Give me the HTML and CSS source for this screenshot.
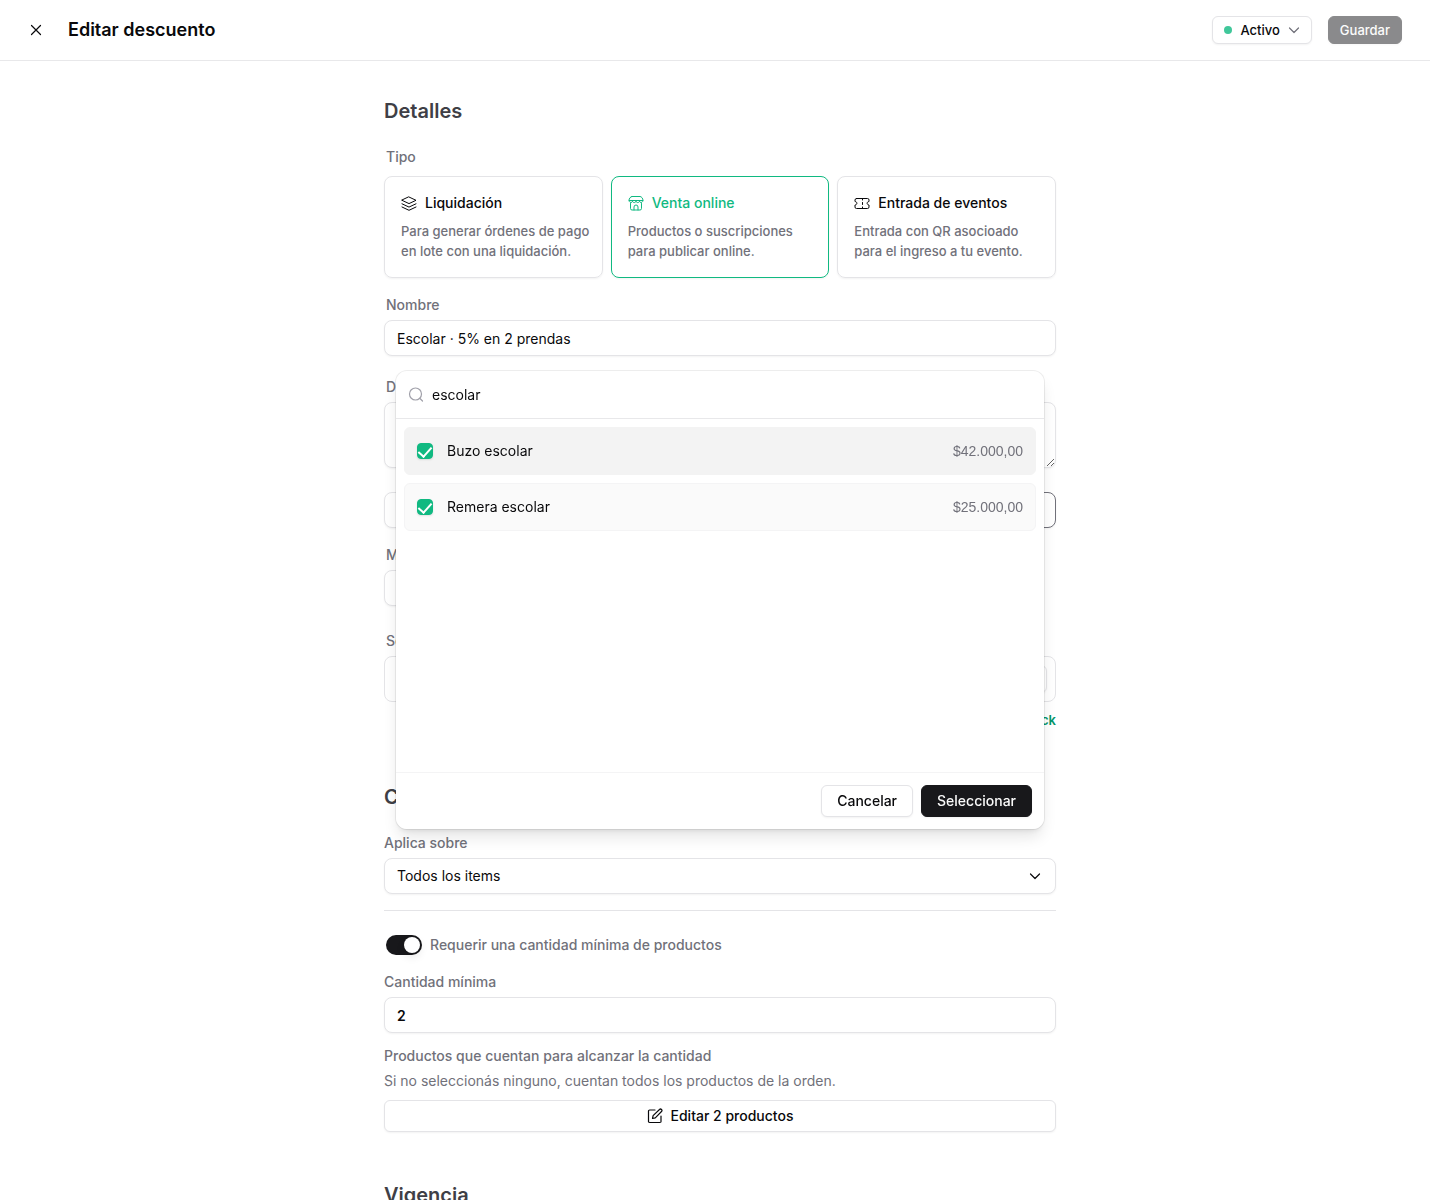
FILE: index.html
```html
<!DOCTYPE html>
<html lang="es">
<head>
    <meta charset="UTF-8">
    <meta name="viewport" content="width=device-width, initial-scale=1.0">
    <title>Editar descuento</title>
    <link rel="stylesheet" href="styles.css">
</head>
<body>
    <header class="topbar">
        <button type="button" class="close" aria-label="Cerrar">
            <svg width="16" height="16" viewBox="0 0 16 16"><path d="M3.5 3.5l9 9M12.5 3.5l-9 9"/></svg>
        </button>
        <h1>Editar descuento</h1>
        <button type="button" class="btn btn-small status">
            <span class="dot"></span>
            Activo
            <svg width="12" height="12" viewBox="0 0 12 12"><path d="M1.500 4L6 8.500 10.500 4"/></svg>
        </button>
        <button type="button" class="btn btn-small btn-dark" disabled>Guardar</button>
    </header>

    <main>
        <form class="form">
            <section class="details">
                <h2>Detalles</h2>
                <fieldset class="types">
                    <legend class="label">Tipo</legend>
                    <div class="cards">
                        <label class="card">
                            <input type="radio" name="tipo" value="liquidacion">
                            <span class="card-title">
                                <svg width="16" height="16" viewBox="0 0 16 16"><path d="M8 2L15 5.300 8 8.600 1 5.300z"/><path d="M1 8.800l7 3.300 7-3.300"/><path d="M1 12l7 3.300L15 12"/></svg>
                                Liquidación
                            </span>
                            <span class="card-text">Para generar órdenes de pago en lote con una liquidación.</span>
                        </label>
                        <label class="card">
                            <input type="radio" name="tipo" value="online" checked>
                            <span class="card-title">
                                <svg width="16" height="16" viewBox="0 0 16 16"><path d="M4 1.500h8c1.500 0 3 2 3 4H1c0-2 1.500-4 3-4z"/><path d="M1 5.500c0 2.600 3.500 2.600 3.500.500 0 2.100 3.500 2.100 3.500 0 0 2.100 3.500 2.100 3.500 0 0 2.100 3.500 2.100 3.500-.500M2.500 8.500v5a1.500 1.500 0 0 0 1.500 1.500h8a1.500 1.500 0 0 0 1.500-1.500v-5M6 15v-3a2 2 0 0 1 4 0v3"/></svg>
                                Venta online
                            </span>
                            <span class="card-text">Productos o suscripciones para publicar online.</span>
                        </label>
                        <label class="card">
                            <input type="radio" name="tipo" value="eventos">
                            <span class="card-title">
                                <svg width="16" height="16" viewBox="0 0 16 16"><path d="M2.500 3.500h11A1.500 1.500 0 0 1 15 5v1.500c-2.500.300-2.500 3.200 0 3.500v2a1.500 1.500 0 0 1-1.500 1.500h-11A1.500 1.500 0 0 1 1 12v-2c2.500-.300 2.500-3.200 0-3.500V5a1.500 1.500 0 0 1 1.500-1.500z"/><path d="M8.500 3.500V5M8.500 7.500v2M8.500 12v1.500"/></svg>
                                Entrada de eventos
                            </span>
                            <span class="card-text">Entrada con QR asocioado para el ingreso a tu evento.</span>
                        </label>
                    </div>
                </fieldset>

                <div class="field">
                    <label class="label" for="nombre">Nombre</label>
                    <input class="control" type="text" id="nombre" value="Escolar · 5% en 2 prendas">
                </div>
                <div class="field spaced">
                    <label class="label" for="descripcion">Descripción</label>
                    <textarea class="control" id="descripcion"></textarea>
                </div>
                <div class="options">
                    <button type="button" class="control" aria-label="Porcentaje"></button>
                    <button type="button" class="control selected" aria-label="Cantidad fija"></button>
                </div>
                <div class="field">
                    <label class="label" for="monto">Monto</label>
                    <input class="control short" type="text" id="monto">
                </div>
                <div class="field wide-gap">
                    <label class="label" for="stock">Selección</label>
                    <div class="stock">
                        <input class="control short" type="text" id="stock">
                    </div>
                </div>
                <a href="#" class="link">Agregar stock</a>
            </section>

            <section class="conditions">
                <h2>Condiciones</h2>
                <div class="field">
                    <label class="label" for="aplica">Aplica sobre</label>
                    <div class="select">
                        <select class="control" id="aplica">
                            <option>Todos los items</option>
                        </select>
                        <svg width="12" height="12" viewBox="0 0 12 12"><path d="M1.500 4L6 8.500 10.500 4"/></svg>
                    </div>
                </div>
                <hr>
                <label class="switch">
                    <input type="checkbox" role="switch" checked>
                    Requerir una cantidad mínima de productos
                </label>
                <div class="field">
                    <label class="label" for="cantidad">Cantidad mínima</label>
                    <input class="control strong" type="text" inputmode="numeric" id="cantidad" value="2">
                </div>
                <div class="products">
                    <h3 class="label">Productos que cuentan para alcanzar la cantidad</h3>
                    <p>Si no seleccionás ninguno, cuentan todos los productos de la orden.</p>
                    <button type="button" class="btn">
                        <svg width="16" height="16" viewBox="0 0 16 16"><path d="M8 2H2.600A1.100 1.100 0 0 0 1.500 3.100v10.300a1.100 1.100 0 0 0 1.100 1.100h10.300a1.100 1.100 0 0 0 1.100-1.100V8"/><path d="M5.500 10.500l.6-2.900 6.400-6.100a1.400 1.400 0 0 1 2 2L8.300 9.800z"/></svg>
                        Editar 2 productos
                    </button>
                </div>
            </section>

            <section>
                <h2>Vigencia</h2>
            </section>
        </form>
    </main>

    <div class="dialog" role="dialog" aria-label="Seleccionar productos">
        <div class="search">
            <svg width="16" height="16" viewBox="0 0 16 16"><circle cx="7.500" cy="7" r="6"/><path d="M12 11.500l2.500 2.500"/></svg>
            <input type="text" aria-label="Buscar productos" value="escolar">
        </div>
        <div class="items">
            <label class="item active">
                <input type="checkbox" checked>
                <span>Buzo escolar</span>
                <span class="price">$42.000,00</span>
            </label>
            <label class="item">
                <input type="checkbox" checked>
                <span>Remera escolar</span>
                <span class="price">$25.000,00</span>
            </label>
        </div>
        <div class="actions">
            <button type="button" class="btn">Cancelar</button>
            <button type="button" class="btn btn-dark">Seleccionar</button>
        </div>
    </div>
</body>
</html>
```
FILE: styles.css
```css
* {
    box-sizing: border-box;
}
body {
    margin: 0;
    height: 100vh;
    display: flex;
    flex-direction: column;
    font-family: Inter, "Liberation Sans", sans-serif;
    font-size: 14px;
    line-height: 20px;
    color: #09090b;
    background-color: #fff;
}
button, input, textarea, select {
    font: inherit;
    color: inherit;
    margin: 0;
}
h1, h2, h3, p {
    margin: 0;
}
svg {
    fill: none;
    stroke: currentColor;
    stroke-width: 1.2;
    stroke-linecap: round;
    stroke-linejoin: round;
    flex-shrink: 0;
}

/* Top bar */
.topbar {
    display: flex;
    align-items: center;
    flex-shrink: 0;
    height: 61px;
    margin-right: 10px;
    padding: 0 28px;
    border-bottom: 1px solid #e8e8ea;
}
.topbar h1 {
    flex: 1;
    margin-left: 24px;
    font-size: 18px;
    line-height: 28px;
    font-weight: 600;
}
.close {
    display: flex;
    padding: 0;
    border: none;
    background: none;
}

/* Buttons */
.btn {
    display: flex;
    align-items: center;
    justify-content: center;
    gap: 8px;
    height: 32px;
    padding: 0 15px;
    border: 1px solid #e4e4e7;
    border-radius: 6px;
    background-color: #fff;
    font-weight: 500;
    box-shadow: 0 1px 2px rgba(0, 0, 0, 0.05);
}
.btn-small {
    height: 28px;
    padding: 0 11px;
    font-size: 13px;
}
.btn-dark {
    background-color: #18181b;
    border-color: #18181b;
    color: #fafafa;
}
.btn-dark:disabled {
    opacity: 0.5;
}
.status {
    margin-right: 16px;
}
.status svg {
    color: #71717a;
}
.dot {
    width: 8px;
    height: 8px;
    border-radius: 50%;
    background-color: #40c79a;
}

/* Form */
main {
    flex: 1;
    overflow-y: auto;
    scrollbar-width: none;
}
.form {
    max-width: 704px;
    margin: 0 auto;
    padding: 36px 16px;
}
h2 {
    margin-bottom: 22px;
    font-size: 20px;
    line-height: 28px;
    font-weight: 600;
    color: #3f3f46;
}
.label {
    display: block;
    padding: 0 0 5px;
    font-size: 14px;
    font-weight: 500;
    color: #71717a;
}
.details .label {
    padding-left: 2px;
}
.control {
    display: block;
    width: 100%;
    height: 36px;
    padding: 0 12px;
    border: 1px solid #e4e4e7;
    border-radius: 8px;
    background-color: #fff;
    box-shadow: 0 1px 2px rgba(0, 0, 0, 0.05);
}
textarea.control {
    height: 66px;
}
.field {
    margin-top: 17px;
}
.spaced {
    margin-top: 21px;
}
.wide-gap {
    margin-top: 25px;
}
.options {
    display: flex;
    gap: 8px;
    margin-top: 24px;
}
.selected {
    border-color: #71717a;
}
.short {
    width: 50%;
}
.strong {
    font-weight: 600;
}

/* Discount type */
.types {
    margin: 0;
    padding: 0;
    border: none;
}
.types .label {
    padding-bottom: 9px;
}
.cards {
    display: grid;
    grid-template-columns: repeat(3, 1fr);
    gap: 8px;
}
.card {
    padding: 16px 8px 16px 16px;
    border: 1px solid #e4e4e7;
    border-radius: 8px;
    box-shadow: 0 1px 2px rgba(0, 0, 0, 0.05);
}
.card input {
    position: absolute;
    opacity: 0;
}
.card-title {
    display: flex;
    align-items: center;
    gap: 8px;
    margin-bottom: 8px;
    font-weight: 500;
}
.card svg {
    stroke-width: 1;
}
.card-text {
    display: block;
    font-size: 13px;
    font-weight: 500;
    color: #71717a;
}
.card:has(:checked) {
    border-color: #10b981;
}
.card:has(:checked) .card-title {
    color: #10b981;
}

.stock {
    display: flex;
    justify-content: flex-end;
    padding: 8px;
    border: 1px solid #e4e4e7;
    border-radius: 8px;
}
.stock .control {
    height: 28px;
    border-radius: 6px;
}
.link {
    display: block;
    margin-top: 8px;
    font-size: 13px;
    font-weight: 600;
    text-align: right;
    text-decoration: none;
    color: #059669;
}

/* Conditions */
.conditions {
    margin: 53px 0 49px;
}
.select {
    position: relative;
}
.select select {
    appearance: none;
}
.select svg {
    position: absolute;
    right: 15px;
    top: 12px;
    pointer-events: none;
}
hr {
    margin: 16px 0 24px;
    border: none;
    border-top: 1px solid #e4e4e7;
}
.switch {
    display: flex;
    gap: 8px;
    padding-left: 2px;
    font-weight: 500;
    color: #71717a;
}
.switch input {
    appearance: none;
    width: 36px;
    height: 20px;
    padding: 2px;
    border-radius: 10px;
    background-color: #d4d4d8;
}
.switch input::before {
    content: "";
    display: block;
    width: 16px;
    height: 16px;
    border-radius: 50%;
    background-color: #fff;
    box-shadow: 0 4px 8px rgba(0, 0, 0, 0.1);
}
.switch input:checked {
    background-color: #18181b;
}
.switch input:checked::before {
    margin-left: auto;
}
.products {
    margin-top: 13px;
    color: #71717a;
}
.products .btn {
    width: 100%;
    margin-top: 9px;
    color: #09090b;
}

/* Product picker */
.dialog {
    position: fixed;
    top: 50%;
    left: 50%;
    transform: translate(-50%, -50%);
    display: flex;
    flex-direction: column;
    width: 650px;
    max-width: 100%;
    height: 460px;
    border: 1px solid rgba(0, 0, 0, 0.07);
    border-radius: 12px;
    background-color: #fff;
    background-clip: padding-box;
    box-shadow: 0 10px 15px -3px rgba(0, 0, 0, 0.1), 0 4px 6px -4px rgba(0, 0, 0, 0.1);
}
.search {
    display: flex;
    align-items: center;
    gap: 8px;
    height: 48px;
    padding: 0 12px;
    border-bottom: 1px solid #e8e8ea;
}
.search svg {
    color: #a1a1aa;
}
.search input {
    flex: 1;
    padding: 0;
    border: none;
    outline: none;
    background: none;
}
.items {
    flex: 1;
    display: flex;
    flex-direction: column;
    gap: 8px;
    padding: 8px;
    overflow-y: auto;
}
.item {
    display: flex;
    align-items: center;
    gap: 14px;
    height: 48px;
    padding: 0 12px;
    border: 1px solid #f4f4f5;
    border-radius: 6px;
    background-color: #fafafa;
}
.item.active {
    background-color: #f3f3f3;
    border-color: #f3f3f3;
}
.item input {
    appearance: none;
    width: 16px;
    height: 16px;
    border: 1px solid #10b981;
    border-radius: 4px;
    box-shadow: 0 1px 2px rgba(0, 0, 0, 0.1);
}
.item input:checked {
    background-color: #10b981;
}
.item input:checked::before {
    content: "";
    display: block;
    width: 6px;
    height: 11px;
    margin: 0 auto;
    border: solid #fff;
    border-width: 0 2px 2px 0;
    transform: rotate(42deg);
}
.price {
    margin-left: auto;
    color: #71717a;
    font-family: "Liberation Sans", Arial, sans-serif;
}
.actions {
    display: flex;
    justify-content: flex-end;
    gap: 8px;
    padding: 12px;
    border-top: 1px solid #f4f4f5;
}
```
